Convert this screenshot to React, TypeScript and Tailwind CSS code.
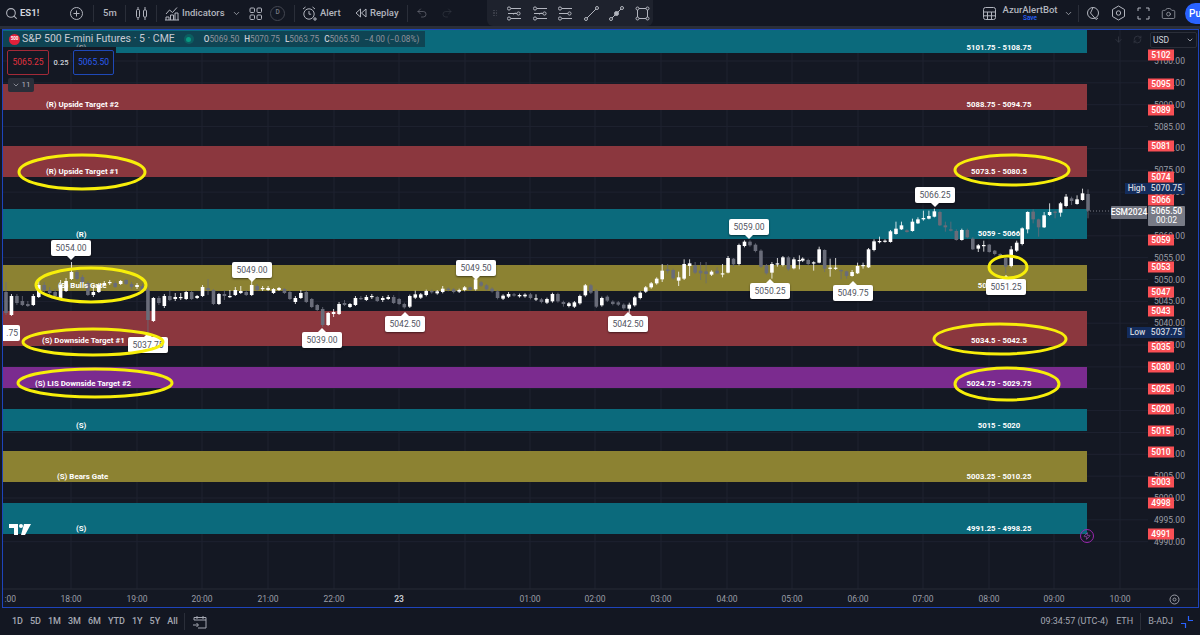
import { ChevronDown, Search, Undo2, Redo2, Camera, Zap, ArrowDown, RefreshCw } from "lucide-react";

type Row = number[];

// candle rows are [up, top, bottom, high?, low?]
const segA: Row[] = [
  [0,292,313,282,315],[1,296,315,294,316],[0,296,303,294,305],[0,301,305,296,306],[0,304,306,301,307],[1,296,305,294,306],[1,285,297,280,298],[0,285,290,282,292],[0,290,293,287,295],[0,292,296,289,298],[1,285,298,280,299],[1,281,291,278,292],[1,272,279,262,280],[0,272,279,270,281],[0,277,283,275,285],[0,283,295,281,296],[1,292,295,285,297],[1,285,292,283,293],[1,283,285,281,286],[1,282,283,280,285],[0,283,287,281,288],[1,281,284,280,285],[0,280,284,279,285],[0,284,287,282,289],[1,285,287,283,289],[0,286,290,284,292],[0,290,320,288,334],[1,298,321,297,322],[0,298,303,296,305],[1,296,306,294,308],[0,296,300,290,301],[1,297,299,293,301],[1,297,298,293,300],[1,292,299,291,300],[0,292,299,291,300],[1,296,298,295,299],[1,287,296,285,297],[0,288,290,279,295],[0,290,304,289,305],[1,294,304,293,305],[0,294,296,290,300],[1,296,297,290,298],[1,290,295,287,296],[1,291,293,286,294],[0,292,295,290,296],[1,285,295,281,296],[0,286,290,284,291],[1,288,289,286,291],[1,288,290,286,291],[1,289,293,288,294],[1,288,290,287,291],[0,289,293,288,294],[0,292,299,291,300],[1,298,302,296,304],[1,293,298,290,299],[0,292,302,290,303],[0,299,307,298,308],[0,305,310,304,311],[0,309,325,307,327],[1,313,325,312,326],[1,312,314,309,317],[1,304,314,302,315],[0,303,305,300,306],[1,304,307,303,308],[1,298,305,296,306],[0,298,299,296,300],[1,297,300,295,301],[1,296,297,294,299],[0,297,301,296,302],[1,298,300,296,302],[1,297,299,295,300],[0,297,303,295,304],[0,299,304,298,305],
];
const segB: Row[] = [
  [0,222,232],[1,198,230],[1,193,203,182],[1,193,203],[1,183,195],[0,183,187],[1,184,190],[1,176,186,168],[0,176,180],[0,178,186],[1,180,185],[1,172,180],[0,172,180,170,182],[1,148,178],[0,157,167],[0,166,178],[0,176,184],[0,184,204],[1,197,206],[1,192,200,186],[0,193,196],[1,195,199],[1,194,199],[0,193,204],[1,205,208,193,213],[0,208,216],[1,207,218],[1,192,214],[0,192,214],[0,216,222,212,230],[1,220,228],[1,217,230],[1,198,220],[1,166,196],[0,166,188],[0,182,230],[1,204,226],[0,200,212],[0,215,222],[0,217,224],[0,224,235],[1,224,236,218,250],[1,202,226],[1,188,204],[1,172,185],[1,160,172],[1,146,160],[1,122,148,102,156],[0,118,123,102,130],[0,120,145],[1,142,152,125,168],[1,102,146,88,150],[1,100,108,88,138],[0,106,128,96,132],[0,122,130,96,150],[0,124,132,96,160],[1,125,134],[0,122,130,112,132],[1,130,132,102,142],[1,84,128,78,130],[0,86,103,84,110],[1,45,102],[1,35,48],[0,35,46],[0,44,63],[0,62,110],[0,106,130],[1,102,128,96,146],[1,100,103,84,110],[1,82,105],[0,82,118],[1,88,115,82,118],[1,90,92,76,118],
];
const segC: Row[] = [
  [1,266,272],[0,270,282],[1,277,280,274,302],[1,238,278,230,280],[0,240,296,238,306],[1,293,296,266,320],[1,293,296,264,300],[0,300,304,298,328],[0,304,318,302,326],[1,306,318,300,320],[1,288,310,278,312],[1,285,288,278,296],[1,238,292,234,294],[1,214,240,208,244],[1,213,216,200,220],[1,212,215,208,218],[1,184,216,180,218],[1,176,192,155,194],[1,166,178,155,180],[0,181,186,178,188],[1,155,183,146,185],[1,148,160,142,162],[1,144,148,122,152],[1,138,146,122,148],[1,124,140,116,142],[0,126,166,122,168],[0,166,172,155,185],[0,178,182,155,184],[0,183,210,178,212],[1,180,210,176,212],[0,180,202,176,205],[0,206,238,202,240],[1,226,236,222,246],[1,225,228,212,245],[0,224,246,222,248],[0,242,252,240,256],[0,252,258,250,262],[0,264,290,262,310],[1,238,288,228,292],[1,218,242,212,246],[1,175,222,172,226],[1,126,178,124,190],[0,125,148,118,160],[0,148,172,146,200],[1,136,172,126,174],[1,126,135,100,138],[0,125,128,122,145],[1,100,128,96,140],[1,80,108,72,112],[0,85,93,80,105],[1,88,102,76,104],[1,70,90,56,92],[0,72,122,58,145],
];

const candles = [
  ...segA.map((r, i) => ({ x: 6 + i * 5.46, up: r[0], top: r[1], bot: r[2], hi: r[3] ?? r[1] - 1, lo: r[4] ?? r[2] + 1 })),
  ...segB.map((r, i) => ({ x: 404.3 + i * 5.487, up: r[0], top: 230 + r[1] / 3, bot: 230 + r[2] / 3, hi: 230 + (r[3] ?? r[1] - 4) / 3, lo: 230 + (r[4] ?? r[2] + 4) / 3 })),
  ...segC.map((r, i) => ({ x: 802.7 + i * 5.487, up: r[0], top: 170 + r[1] / 3, bot: 170 + r[2] / 3, hi: 170 + (r[3] ?? r[1] - 4) / 3, lo: 170 + (r[4] ?? r[2] + 4) / 3 })),
];

const bands = [
  { y: 30, h: 23, c: "#0b6a7c" },
  { y: 84, h: 26, c: "#8b373e" },
  { y: 146, h: 31, c: "#8b373e" },
  { y: 209, h: 30, c: "#0b6a7c" },
  { y: 265, h: 26, c: "#8c8232" },
  { y: 311, h: 35, c: "#8b373e" },
  { y: 367, h: 21, c: "#7b2b8f" },
  { y: 409, h: 22, c: "#0b6a7c" },
  { y: 451, h: 31, c: "#8c8232" },
  { y: 503, h: 31, c: "#0b6a7c" },
];

const hours = [
  ["18:00", 71], ["19:00", 137], ["20:00", 202], ["21:00", 268], ["22:00", 334], ["23", 399], ["01:00", 530], ["02:00", 595],
  ["03:00", 661], ["04:00", 727], ["05:00", 792], ["06:00", 858], ["07:00", 923], ["08:00", 989], ["09:00", 1054], ["10:00", 1120],
] as const;

const priceY = (p: number) => 61 + (5100 - p) * 4.37;
const ticks = Array.from({ length: 23 }, (_, i) => 5100 - i * 5);

const leftLabels = [
  { t: "(S)", x: 76, y: 48 },
  { t: "(R) Upside Target #2", x: 46, y: 105 },
  { t: "(R) Upside Target #1", x: 46, y: 172 },
  { t: "(R)", x: 76, y: 235 },
  { t: "(S) Bulls Gate", x: 58, y: 286 },
  { t: "(S) Downside Target #1", x: 42, y: 341 },
  { t: "(S) LIS Downside Target #2", x: 35, y: 384 },
  { t: "(S)", x: 76, y: 426 },
  { t: "(S) Bears Gate", x: 57, y: 477 },
  { t: "(S)", x: 76, y: 529 },
];

const rightLabels = [
  { t: "5101.75 - 5108.75", x: 999, y: 48 },
  { t: "5088.75 - 5094.75", x: 999, y: 105 },
  { t: "5073.5 - 5080.5", x: 999, y: 172 },
  { t: "5059 - 5066", x: 999, y: 234 },
  { t: "5046 - 5053", x: 999, y: 286 },
  { t: "5034.5 - 5042.5", x: 999, y: 341 },
  { t: "5024.75 - 5029.75", x: 999, y: 384 },
  { t: "5015 - 5020", x: 999, y: 426 },
  { t: "5003.25 - 5010.25", x: 999, y: 477 },
  { t: "4991.25 - 4998.25", x: 999, y: 529 },
];

// dir: pointer side of the callout, y is the top of the box
const callouts = [
  { t: "5054.00", x: 71, y: 240, dir: "down" },
  { t: "5049.00", x: 252, y: 262, dir: "down" },
  { t: "5049.50", x: 476, y: 260, dir: "down" },
  { t: "5059.00", x: 749, y: 219, dir: "down" },
  { t: "5066.25", x: 935, y: 187, dir: "down" },
  { t: "5037.75", x: 148, y: 337, dir: "up" },
  { t: "5039.00", x: 322, y: 332, dir: "up" },
  { t: "5042.50", x: 405, y: 316, dir: "up" },
  { t: "5042.50", x: 628, y: 316, dir: "up" },
  { t: "5050.25", x: 770, y: 283, dir: "up" },
  { t: "5049.75", x: 853, y: 285, dir: "up" },
  { t: "5051.25", x: 1006, y: 279, dir: "up" },
];

const rings = [
  [82, 172, 63, 17], [1012, 170, 57, 15], [91, 285, 55, 17], [93, 342, 70, 13],
  [95, 383, 77, 14], [1000, 339, 66, 15], [1007, 384, 52, 16], [1008, 267, 19, 11],
];

const redTags = [
  ["5102", 55], ["5095", 84], ["5089", 110], ["5081", 146], ["5074", 177], ["5066", 200], ["5059", 240], ["5053", 267], ["5047", 292], ["5043", 311],
  ["5035", 347], ["5030", 367], ["5025", 389], ["5020", 409], ["5015", 431], ["5010", 452], ["5003", 482], ["4998", 503], ["4991", 534],
] as const;

const ranges = ["1D", "5D", "1M", "3M", "6M", "YTD", "1Y", "5Y", "All"];

function Divider({ className = "" }: { className?: string }) {
  return <div className={`h-[17px] w-px shrink-0 bg-[#2a2e39] ${className}`} />;
}

function Ico({ children, w = 15, className = "" }: { children: React.ReactNode; w?: number; className?: string }) {
  return (
    <svg width={w} height={15} viewBox="0 0 15 15" fill="none" stroke="currentColor" strokeWidth="1" className={`shrink-0 ${className}`}>
      {children}
    </svg>
  );
}

function ToolIcon({ rows, slash }: { rows: number[]; slash?: boolean }) {
  return (
    <Ico>
      {rows.map((y, i) => (
        <g key={y}>
          <path d={i === 1 ? `M1 ${y}h9` : `M4 ${y}h10`} />
          <circle cx={i === 1 ? 11.5 : 2} cy={y} r="1.6" />
        </g>
      ))}
      {slash && <path d="M6 8.5l3-2.5" strokeDasharray="1 1" />}
    </Ico>
  );
}

export default function App() {
  return (
    <div className="flex h-[635px] w-[1200px] flex-col overflow-hidden bg-[#131722] font-[Roboto,sans-serif] text-[#b2b5be]">
      {/* top toolbar */}
      <header className="flex h-[26px] shrink-0 items-center text-[9.5px] font-medium">
        <Search size={13} className="ml-[5px] shrink-0" />
        <span className="ml-[2px] w-[18px] text-[9.5px] font-bold text-[#d1d4dc]">ES1!</span>
        <Ico className="ml-[31px]">
          <circle cx="7.5" cy="7.5" r="6" />
          <path d="M7.5 4.5v6M4.5 7.5h6" />
        </Ico>
        <Divider className="ml-[9px]" />
        <span className="ml-[9px] w-[13px]">5m</span>
        <Divider className="ml-[9px]" />
        <Ico className="ml-[8px]">
          <path d="M4 1v2.5M4 11.5V14M11 1v3M11 11v3" />
          <rect x="2.5" y="3.5" width="3" height="8" rx="1" />
          <rect x="9.5" y="4" width="3" height="7" rx="1" />
        </Ico>
        <Divider className="ml-[7px]" />
        <svg width="14" height="15" viewBox="0 0 14 15" fill="none" stroke="currentColor" strokeWidth="1" className="ml-[8px] shrink-0">
          <path d="M1 8l3.5-4 3 2.5L12 1.5" />
          <path d="M1 14v-3h3v3M5.5 14v-5h3v5M10 14v-7h3v7M0 14h14" />
        </svg>
        <span className="ml-[3px] w-[42px] whitespace-nowrap">Indicators</span>
        <ChevronDown size={9} className="ml-[8px] shrink-0" />
        <Ico className="ml-[7px]">
          <rect x="2" y="2" width="4.5" height="4.5" rx="1" />
          <rect x="9" y="2" width="4.5" height="4.5" rx="1" />
          <rect x="2" y="9" width="4.5" height="4.5" rx="1" />
          <rect x="9" y="9" width="4.5" height="4.5" rx="1" />
        </Ico>
        <div className="ml-[7px] flex h-[15px] w-[15px] shrink-0 items-center justify-center rounded-full border border-[#434651] text-[6.5px] text-[#787b86]">D</div>
        <Divider className="ml-[9px]" />
        <Ico className="ml-[7px]">
          <circle cx="7" cy="8" r="5.2" />
          <path d="M7 5v3.2h2.2M1 3l2.5-2M13 3l-2.5-2M11 13h4M13 11v4" />
        </Ico>
        <span className="ml-[3px] w-[22px]">Alert</span>
        <svg width="12" height="10" viewBox="0 0 12 10" fill="none" stroke="currentColor" className="ml-[13px] shrink-0">
          <path d="M5.5 1L1 5l4.5 4zM11 1L6.5 5l4.5 4z" />
        </svg>
        <span className="ml-[3px] w-[29px]">Replay</span>
        <Divider className="ml-[8px]" />
        <Undo2 size={12} strokeWidth={1.2} className="ml-[8px] shrink-0 text-[#787b86]" />
        <Redo2 size={12} strokeWidth={1.2} className="ml-[13px] shrink-0 text-[#363a45]" />

        <div className="ml-[34px] flex h-[26px] w-[166px] shrink-0 items-center rounded-b-md bg-[#1e222d] pl-[6px]">
          <div className="grid grid-cols-2 gap-[1px]">
            {[0, 1, 2, 3, 4, 5].map((n) => (
              <span key={n} className="h-[1.5px] w-[1.5px] rounded-full bg-[#434651]" />
            ))}
          </div>
          <div className="ml-[10px] flex items-center gap-[10.5px]">
            <ToolIcon rows={[2.5, 7.5, 12.5]} slash />
            <ToolIcon rows={[2.5, 7.5, 12.5]} slash />
            <ToolIcon rows={[2.5, 7.5, 12.5]} />
            <Ico>
              <path d="M3 12l9-9" />
              <circle cx="2" cy="13" r="1.5" />
              <circle cx="13" cy="2" r="1.5" />
            </Ico>
            <Ico>
              <path d="M3 12l9-9" />
              <circle cx="2" cy="13" r="1.5" />
              <circle cx="13" cy="2" r="1.5" />
              <circle cx="7.5" cy="7.5" r="2" fill="currentColor" />
            </Ico>
            <Ico>
              <rect x="2.5" y="2.5" width="10" height="10" />
              <circle cx="2.5" cy="2.5" r="1.5" fill="#1e222d" />
              <circle cx="12.5" cy="2.5" r="1.5" fill="#1e222d" />
              <circle cx="2.5" cy="12.5" r="1.5" fill="#1e222d" />
              <circle cx="12.5" cy="12.5" r="1.5" fill="#1e222d" />
            </Ico>
          </div>
        </div>

        <div className="ml-auto flex items-center">
          <Ico>
            <rect x="1.5" y="1.5" width="12" height="12" rx="2" />
            <path d="M1.5 6h12M5.5 6v7.5M9.5 6v7.5M1.5 9.8h12" />
          </Ico>
          <div className="ml-[5px] flex w-[56px] flex-col items-center leading-none">
            <span className="text-[9.5px] text-[#b2b5be]">AzurAlertBot</span>
            <span className="mt-[1px] text-[6.5px] text-[#2962ff]">Save</span>
          </div>
          <ChevronDown size={9} className="ml-[6px] shrink-0" />
          <Divider className="ml-[5px]" />
          <Ico className="ml-[7px]">
            <circle cx="7" cy="7" r="5.5" />
            <path d="M7 1.5L4.5 7 10 13.5l2-1.5" />
          </Ico>
          <svg width="15" height="16" viewBox="0 0 15 16" fill="none" stroke="currentColor" className="ml-[10px] shrink-0">
            <path d="M7.5 1l6 3.5v7l-6 3.5-6-3.5v-7z" />
            <circle cx="7.5" cy="8" r="2.2" />
          </svg>
          <Ico className="ml-[10px]">
            <path d="M2 5V2h3M10 2h3v3M13 10v3h-3M5 13H2v-3" />
          </Ico>
          <Camera size={15} strokeWidth={1.1} className="ml-[10px] shrink-0" />
          <div className="ml-[9px] flex h-[21px] w-[15px] items-center overflow-hidden rounded-l-full bg-[#2962ff] pl-[4px] text-[10px] text-white">Pu</div>
        </div>
      </header>
      <div className="h-[3px] shrink-0 bg-[#2a2e39]" />

      {/* chart frame */}
      <main className="relative ml-[2px] mr-[1px] h-[579px] shrink-0 overflow-hidden border border-[#1e44bb] bg-[#141823]">
        <div className="absolute left-[-3px] top-[-30px] h-[635px] w-[1200px]">
          <svg width="1200" height="635" className="absolute left-0 top-0">
            {ticks.map((p) => (
              <path key={p} d={`M3 ${priceY(p)}H1148`} stroke="#1e2230" strokeWidth="1" />
            ))}
            {hours.map(([t, x]) => (
              <path key={t} d={`M${x} 30V589`} stroke="#1e2230" strokeWidth="1" />
            ))}
            <path d="M465 30V589" stroke="#1e2230" strokeWidth="1" />
            <path d="M3 589H1198" stroke="#262a36" strokeWidth="1" />
            {bands.map((b) => (
              <rect key={b.y} x="3" y={b.y} width="1084" height={b.h} fill={b.c} />
            ))}
            <path d="M1087 211H1111" stroke="#787b86" strokeWidth="1" strokeDasharray="1 2" />
            {candles.map((c) => (
              <g key={c.x} fill={c.up ? "#ffffff" : "#696c79"} stroke={c.up ? "#ffffff" : "#696c79"}>
                <path d={`M${c.x} ${c.hi}V${c.lo}`} strokeWidth="0.8" fill="none" />
                <rect x={c.x - 1.8} y={c.top} width="3.6" height={Math.max(c.bot - c.top, 1.2)} stroke="none" />
              </g>
            ))}
          </svg>

          {/* zone labels */}
          {leftLabels.map((l) => (
            <span key={l.y} className="absolute -translate-y-1/2 whitespace-nowrap text-[7.9px] font-bold text-white" style={{ left: l.x, top: l.y }}>
              {l.t}
            </span>
          ))}
          {rightLabels.map((l) => (
            <span key={l.y} className="absolute -translate-x-1/2 -translate-y-1/2 whitespace-nowrap text-[7.75px] font-bold text-white" style={{ left: l.x, top: l.y }}>
              {l.t}
            </span>
          ))}

          {/* high / low callouts */}
          {callouts.map((c) => (
            <div key={c.x} className="absolute flex h-[16px] w-[40px] -translate-x-1/2 items-center justify-center rounded-[2px] bg-white text-[8.5px] text-[#50535e] shadow-[0_1px_2px_rgba(0,0,0,0.5)]" style={{ left: c.x, top: c.y }}>
              {c.t}
              {c.dir === "down" ? (
                <span className="absolute bottom-[-4px] left-1/2 -ml-[4px] border-x-[4px] border-t-[4px] border-x-transparent border-t-white" />
              ) : (
                <span className="absolute left-1/2 top-[-4px] -ml-[4px] border-x-[4px] border-b-[4px] border-x-transparent border-b-white" />
              )}
            </div>
          ))}
          <div className="absolute left-[3px] top-[325px] flex h-[16px] w-[17px] items-center justify-end overflow-hidden rounded-r-[2px] bg-white pr-[2px] text-[8.5px] text-[#50535e]">.75</div>

          {/* hand drawn yellow rings */}
          <svg width="1200" height="635" className="absolute left-0 top-0">
            {rings.map(([cx, cy, rx, ry]) => (
              <ellipse key={cx + cy} cx={cx} cy={cy} rx={rx} ry={ry} fill="none" stroke="#f7ee0a" strokeWidth="3" />
            ))}
          </svg>

          {/* legend */}
          <div className="absolute left-[3px] top-[31px] flex h-[16px] w-[422px] items-center bg-[#131722]/45">
            <span className="ml-[6px] flex h-[11px] w-[11px] items-center justify-center rounded-full bg-[#e0213a] text-[4.5px] font-bold text-white">500</span>
            <span className="ml-[2px] whitespace-nowrap text-[10.5px] text-[#c8cbd4]">S&amp;P 500 E-mini Futures · 5 · CME</span>
            <span className="ml-[9px] flex h-[10px] w-[10px] items-center justify-center rounded-full bg-[#089981]/30">
              <span className="h-[5px] w-[5px] rounded-full bg-[#089981]" />
            </span>
            <span className="ml-[10px] whitespace-nowrap text-[8.2px] text-[#8f929c]">
              <b className="font-medium text-[#c8cbd4]">O</b>5069.50 <b className="ml-[3px] font-medium text-[#c8cbd4]">H</b>5070.75 <b className="ml-[3px] font-medium text-[#c8cbd4]">L</b>5063.75 <b className="ml-[3px] font-medium text-[#c8cbd4]">C</b>5065.50 <span className="ml-[3px]">−4.00 (−0.08%)</span>
            </span>
          </div>
          <div className="absolute left-[3px] top-[47px] h-[6px] w-[113px] bg-[#141823]" />

          {/* buy / sell */}
          <div className="absolute left-[7px] top-[50px] flex items-center">
            <div className="flex h-[25px] w-[42px] items-center justify-center rounded-[2px] border border-[#a32a38] bg-[#141823] text-[8.5px] text-[#e0323f]">5065.25</div>
            <span className="w-[24px] text-center text-[7.5px] font-medium text-[#d1d4dc]">0.25</span>
            <div className="flex h-[25px] w-[41px] items-center justify-center rounded-[2px] border border-[#1f49b8] bg-[#141823] text-[8.5px] text-[#2a5cf0]">5065.50</div>
          </div>
          <div className="absolute left-[8px] top-[78px] flex h-[14px] w-[26px] items-center justify-center gap-[2px] rounded-[2px] bg-[#2a2e39] text-[8px] text-[#b2b5be]">
            <ChevronDown size={8} />
            11
          </div>

          {/* tv logo */}
          <svg width="22" height="12" viewBox="0 0 22 12" fill="#ffffff" className="absolute left-[9px] top-[524px]">
            <path d="M0 0h9v11H5V4H0zM15 0h7l-6 11h-4z" />
            <circle cx="12" cy="2" r="2" />
          </svg>

          {/* price scale */}
          {ticks.map((p) => (
            <span key={p} className="absolute left-[1154px] -translate-y-1/2 text-[8.5px] text-[#9a9da6]" style={{ top: priceY(p) }}>
              {p}.00
            </span>
          ))}
          {redTags.map(([t, y]) => (
            <div key={t} className="absolute left-[1148px] flex h-[11px] w-[26px] -translate-y-1/2 items-center justify-center bg-[#f94f55] text-[8.5px] font-medium text-white" style={{ top: y }}>
              {t}
            </div>
          ))}
          <div className="absolute left-[1125px] top-[183px] flex h-[11px] items-center text-[8.5px] font-medium text-[#d1d4dc]">
            <span className="flex h-full w-[23px] items-center justify-center bg-[#132c5c]">High</span>
            <span className="flex h-full w-[37px] items-center justify-center bg-[#132c5c]">5070.75</span>
          </div>
          <div className="absolute left-[1127px] top-[327px] flex h-[11px] items-center text-[8.5px] font-medium text-[#d1d4dc]">
            <span className="flex h-full w-[21px] items-center justify-center bg-[#132c5c]">Low</span>
            <span className="flex h-full w-[37px] items-center justify-center bg-[#132c5c]">5037.75</span>
          </div>
          <div className="absolute left-[1111px] top-[206px] flex items-start text-[8.5px] font-medium text-white">
            <span className="flex h-[13px] w-[36px] items-center justify-center rounded-l-[1px] bg-[#6f727e]">ESM2024</span>
            <span className="ml-px flex h-[20px] w-[37px] flex-col items-center justify-center rounded-[1px] bg-[#787b86] leading-[9.5px]">
              <span>5065.50</span>
              <span className="font-normal">00:02</span>
            </span>
          </div>

          {/* chart corner controls */}
          <ArrowDown size={9} className="absolute left-[1114px] top-[35px] text-[#363a45]" />
          <RefreshCw size={9} className="absolute left-[1133px] top-[35px] text-[#363a45]" />
          <div className="absolute left-[1150px] top-[32px] flex h-[16px] w-[47px] items-center justify-between rounded-[2px] border border-[#2a2e39] bg-[#131722] px-[2px] text-[8.5px] text-[#d1d4dc]">
            USD
            <ChevronDown size={8} />
          </div>
          <div className="absolute left-[1080px] top-[529px] flex h-[14px] w-[14px] items-center justify-center rounded-full border border-[#9c27b0] text-[#b04fc4]">
            <Zap size={8} />
          </div>

          {/* time scale */}
          <span className="absolute left-[3px] top-[593px] w-[13px] overflow-hidden text-right text-[8.5px] text-[#9a9da6]">:00</span>
          {hours.map(([t, x]) => (
            <span key={t} className={`absolute top-[593px] -translate-x-1/2 text-[8.5px] ${t === "23" ? "font-semibold text-[#c8cbd4]" : "text-[#9a9da6]"}`} style={{ left: x }}>
              {t}
            </span>
          ))}
          <svg width="11" height="11" viewBox="0 0 11 11" fill="none" stroke="#9a9da6" className="absolute left-[1169px] top-[594px]">
            <circle cx="5.5" cy="5.5" r="4.5" />
            <circle cx="5.5" cy="5.5" r="1.5" />
          </svg>
        </div>
      </main>

      {/* bottom bar */}
      <footer className="flex h-[27px] shrink-0 items-center text-[9px] text-[#a5a8b2]">
        <div className="ml-[12px] flex items-center gap-[7px] font-medium">
          {ranges.map((r) => (
            <span key={r}>{r}</span>
          ))}
        </div>
        <Divider className="ml-[6px]" />
        <svg width="14" height="14" viewBox="0 0 14 14" fill="none" stroke="currentColor" className="ml-[8px] shrink-0">
          <path d="M1 5V2.5h12V13H5M1 5h12M4 1v3M10 1v3M0 10h5M3.5 8l2 2-2 2" />
        </svg>
        <div className="ml-auto flex items-center">
          <span className="whitespace-nowrap text-[9px]">09:34:57 (UTC-4)</span>
          <span className="ml-[8px]">ETH</span>
          <Divider className="ml-[7px]" />
          <span className="ml-[7px]">B-ADJ</span>
          <svg width="12" height="12" viewBox="0 0 12 12" fill="none" stroke="#2962ff" strokeWidth="1.2" className="ml-[8px] mr-[7px] shrink-0">
            <path d="M0 7.5h4.5V12M7.5 0v4.5H12" />
          </svg>
        </div>
      </footer>
    </div>
  );
}
